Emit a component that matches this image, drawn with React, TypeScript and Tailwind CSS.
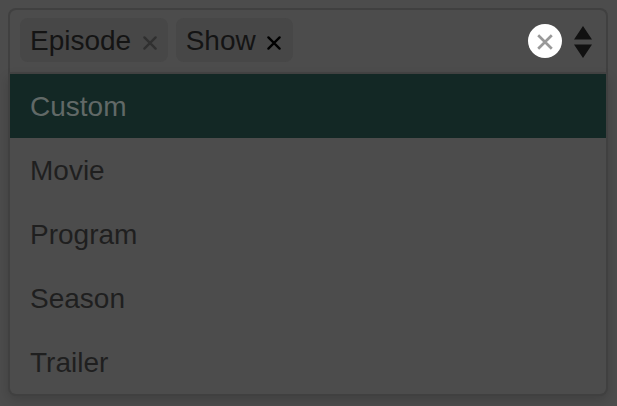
import { useState } from "react";

const options = ["Custom", "Movie", "Program", "Season", "Trailer"];

export default function App() {
  const [selected, setSelected] = useState<string[]>(["Episode", "Show"]);
  const [active, setActive] = useState("Custom");

  const remove = (name: string) => setSelected(selected.filter((s) => s !== name));

  return (
    <div className="h-[406px] w-[617px] overflow-hidden bg-[#4c4c4c] pl-2 pt-2 font-['Liberation_Sans',Arial,sans-serif] text-[28px] leading-8">
      {/* control */}
      <div className="flex h-[66px] w-[600px] items-start gap-[7.5px] rounded-t-[8px] border-2 border-[#404040] border-b-[#444] px-2.5 pt-2">
        {selected.map((name) => (
          <Tag key={name} name={name} highlighted={name === "Show"} onRemove={() => remove(name)} />
        ))}
        <button
          aria-label="Clear all"
          onClick={() => setSelected([])}
          className="ml-auto mt-1.5 flex h-[34px] w-[34px] items-center justify-center rounded-full bg-white pt-[1.5px]"
        >
          <svg width="16" height="16" viewBox="0 0 16 16" fill="none" stroke="#999" strokeWidth="2.7">
            <path d="M1.2 1.2 14.8 14.8M14.8 1.2 1.2 14.8" />
          </svg>
        </button>
        <svg
          className="ml-[4.5px] mr-1 mt-2 shrink-0 blur-[0.5px]"
          width="18"
          height="32"
          viewBox="0 0 18 32"
          fill="#111"
        >
          <path d="M9 0 18 13.5H0ZM9 32 0 18.5H18Z" />
        </svg>
      </div>

      {/* menu */}
      <ul className="h-[322px] w-[600px] rounded-b-[8px] border-x-2 border-b-2 border-[#404040] bg-[#4c4c4c] shadow-[0_4px_12px_rgba(0,0,0,0.16)]">
        {options.map((name) => (
          <li
            key={name}
            onMouseEnter={() => setActive(name)}
            className={`flex h-16 items-center px-5 pt-0.5 ${
              name === active ? "bg-[#132825] text-[#616967]" : "text-[#1f1f1f]"
            } last:rounded-b-[6px]`}
          >
            {name}
          </li>
        ))}
      </ul>
    </div>
  );
}

function Tag({ name, highlighted, onRemove }: { name: string; highlighted: boolean; onRemove: () => void }) {
  return (
    <span className="flex h-11 items-center rounded-[8px] bg-[#474747] pl-2.5 pr-[11.5px] text-[#141414]">
      <span className="relative top-px">{name}</span>
      <button aria-label={`Remove ${name}`} onClick={onRemove} className="ml-[11.5px] mt-[5px]">
        <svg
          width="14"
          height="14"
          viewBox="0 0 14 14"
          fill="none"
          stroke={highlighted ? "#000" : "#303030"}
          strokeWidth="2.3"
          strokeLinecap="round"
        >
          <path d="M1.4 1.4 12.6 12.6M12.6 1.4 1.4 12.6" />
        </svg>
      </button>
    </span>
  );
}
